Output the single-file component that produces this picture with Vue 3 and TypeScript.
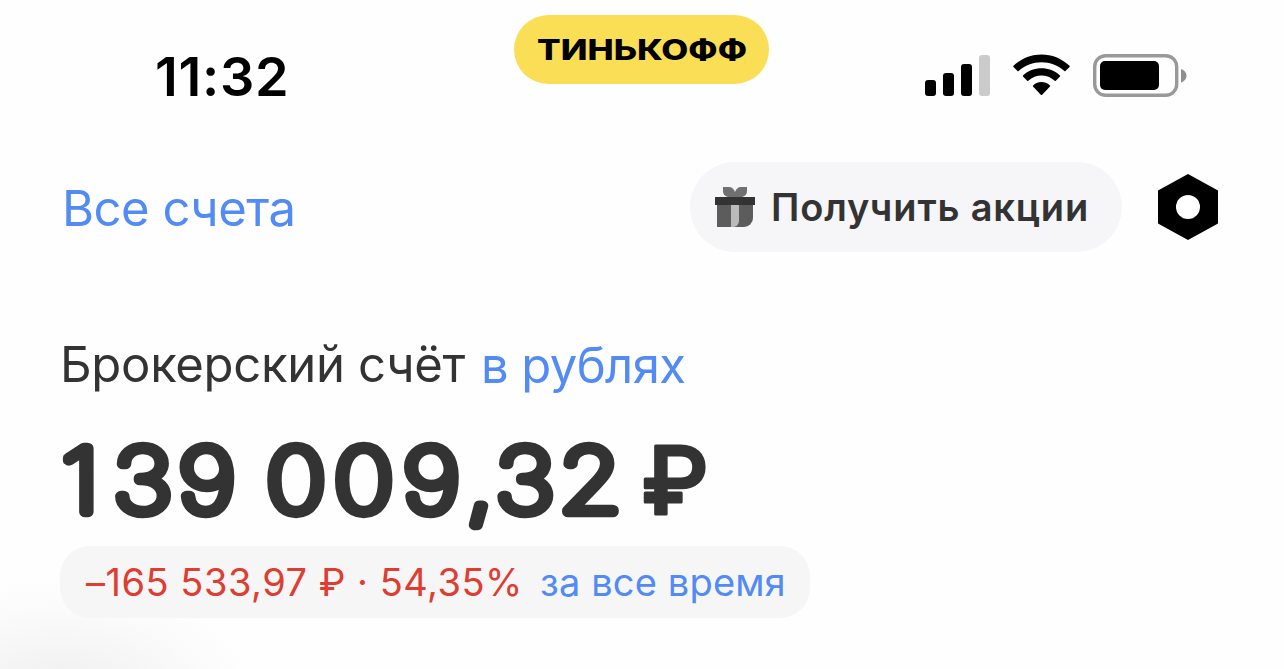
<script setup lang="ts">
const time = '11:32'
const signalBars = [
  { x: 0, height: 16, on: true },
  { x: 18, height: 23, on: true },
  { x: 36, height: 32, on: true },
  { x: 54, height: 41, on: false },
]
const account = {
  name: 'Брокерский счёт',
  currency: 'в рублях',
  change: '–165 533,97 ₽ · 54,35%',
  period: 'за все время',
}
</script>

<template>
  <main class="screen">
    <header class="status-bar">
      <span class="time">{{ time }}</span>
      <div class="brand">
        <svg width="240" height="40" viewBox="0 0 240 40">
          <text x="15" y="30" class="brand-text" textLength="210" lengthAdjust="spacingAndGlyphs">ТИНЬКОФФ</text>
        </svg>
      </div>
      <div class="indicators">
        <svg class="signal" width="66" height="42" viewBox="0 0 66 42">
          <rect
            v-for="bar in signalBars"
            :key="bar.x"
            :x="bar.x"
            :y="41 - bar.height"
            width="11"
            :height="bar.height"
            rx="3"
            :fill="bar.on ? '#000' : '#cbcbcb'"
          />
        </svg>
        <svg class="wifi" width="58" height="42" viewBox="0 0 58 42">
          <path d="M.5 12.9Q0 12.4.5 11.8C16-3.4 41-3.4 56.5 11.8q.5.6 0 1.1l-4 4.1q-.5.5-1.1 0C39 5.4 18 5.4 5.6 17q-.6.5-1.1 0z" />
          <path d="M10 22.5q-.5-.5 0-1.1C20.2 11.9 36.8 11.9 47 21.4q.5.6 0 1.1l-4.2 4.3q-.5.5-1.1 0C34.1 19.8 22.9 19.8 15.3 26.8q-.6.5-1.1 0z" />
          <path d="M20 32.5q-.5-.6.1-1.1C25.1 27 31.9 27 36.9 31.4q.6.5.1 1.1L29.2 40.7q-.7.7-1.4 0z" />
        </svg>
        <svg class="battery" width="95" height="44" viewBox="0 0 95 44">
          <rect x="1.7" y="1.7" width="82" height="39.6" rx="11" fill="none" stroke="#999" stroke-width="3.4" />
          <rect x="7" y="7" width="59" height="29" rx="5" />
          <path d="M88 15c3 1 5.5 3.5 5.5 6.7s-2.5 5.7-5.5 6.7z" fill="#8f8f8f" />
        </svg>
      </div>
    </header>

    <nav class="toolbar">
      <a class="all-accounts">Все счета</a>
      <button class="stocks">
        <svg width="40" height="40" viewBox="0 0 40 40">
          <path d="M8 0h6c3 0 5 2 6 5 1-3 3-5 6-5h6v4c0 4-3 6-7 6H15c-4 0-7-2-7-6z" fill="#707070" />
          <path d="M2 18h36v13a9 9 0 0 1-9 9H2z" fill="#5c5c5c" />
          <path d="M16 18h8v16a6 6 0 0 1-6 6h-2z" fill="#bababa" />
          <path d="M0 10h40v8H0z" fill="#333" />
        </svg>
        <span>Получить акции</span>
      </button>
      <svg class="settings" width="60" height="66" viewBox="0 0 60 66">
        <path d="M30 0l30 16.5v33L30 66 0 49.5v-33z" />
        <circle cx="30" cy="33" r="12" fill="#fff" />
      </svg>
    </nav>

    <section class="account">
      <h1 class="account-name"><span>{{ account.name }}</span> <a>{{ account.currency }}</a></h1>
      <svg class="balance" width="680" height="110" viewBox="0 0 680 110">
        <text transform="scale(1.16 1)" y="81.5" x="1.5 46 102 177.5 236 295.5 350.5 375.5 430">139009,32</text>
        <text class="ruble" y="83.5" x="581.5">₽</text>
      </svg>
      <div class="result">
        <span class="change">{{ account.change }}</span>
        <span class="period">{{ account.period }}</span>
      </div>
    </section>
  </main>
</template>

<style>
body {
  margin: 0;
  background: #fefefe;
}
</style>

<style scoped>
.screen {
  box-sizing: border-box;
  width: 1284px;
  height: 669px;
  overflow: hidden;
  color: #333;
  font-family: Inter, 'Liberation Sans', sans-serif;
  background: radial-gradient(ellipse 200px 125px at 60px 702px, #efefef, #f3f3f3 30%, #fbfbfb 75%, #fefefe);
}
.status-bar {
  display: grid;
  grid-template-columns: 514px 255px 1fr;
  height: 162px;
  color: #000;
}
.time {
  padding: 45px 0 0 155px;
  font-size: 54px;
  font-weight: 600;
  line-height: 64px;
  letter-spacing: 0.7px;
}
.brand {
  display: flex;
  align-items: center;
  justify-content: center;
  height: 69px;
  margin-top: 15px;
  border-radius: 35px;
  background: #fade56;
}
.brand-text {
  font-size: 28px;
  font-weight: 800;
}
.indicators {
  display: flex;
  align-items: flex-start;
  padding: 54px 0 0 156px;
}
.signal {
  margin-top: 1px;
}
.wifi {
  margin-left: 22px;
}
.battery {
  margin-left: 22px;
}
.toolbar {
  display: flex;
  align-items: center;
  height: 90px;
  padding: 0 66px 0 62px;
}
.all-accounts {
  flex: 1;
  padding-top: 4px;
  color: #528bf5;
  font-size: 49px;
  line-height: 60px;
  letter-spacing: -0.5px;
  white-space: nowrap;
}
.stocks {
  display: flex;
  align-items: center;
  gap: 16px;
  box-sizing: border-box;
  width: 432px;
  height: 90px;
  margin-right: 36px;
  padding: 0 0 0 25px;
  border: none;
  border-radius: 45px;
  background: #f6f6f9;
  color: #333;
  font-family: inherit;
  font-size: 38px;
  font-weight: 600;
  line-height: 46px;
  letter-spacing: 0.85px;
  white-space: nowrap;
}
.account {
  padding: 82px 0 0 60px;
}
.account-name {
  display: flex;
  gap: 16px;
  height: 64px;
  margin: 0;
  font-size: 49px;
  font-weight: 400;
  line-height: 62px;
  letter-spacing: -0.3px;
  white-space: nowrap;
}
.account-name a {
  padding-top: 1px;
  color: #528bf5;
  letter-spacing: -0.6px;
}
.balance {
  display: block;
  margin-top: 32px;
  overflow: visible;
  fill: #333;
  stroke: #333;
  stroke-width: 10.5px;
  stroke-linejoin: round;
  font-size: 87.5px;
  font-weight: 100;
}
.ruble {
  font-size: 94px;
  font-weight: 500;
  stroke-width: 3px;
}
.result {
  display: flex;
  align-items: center;
  box-sizing: border-box;
  width: 750px;
  height: 72px;
  margin-top: 6px;
  padding-left: 26px;
  border-radius: 30px;
  background: #f6f6f6;
  font-size: 38px;
  line-height: 46px;
  white-space: nowrap;
}
.change {
  width: 454px;
  color: #df3c32;
  letter-spacing: 0.5px;
}
.period {
  color: #528bf5;
  letter-spacing: 0.15px;
}
</style>
